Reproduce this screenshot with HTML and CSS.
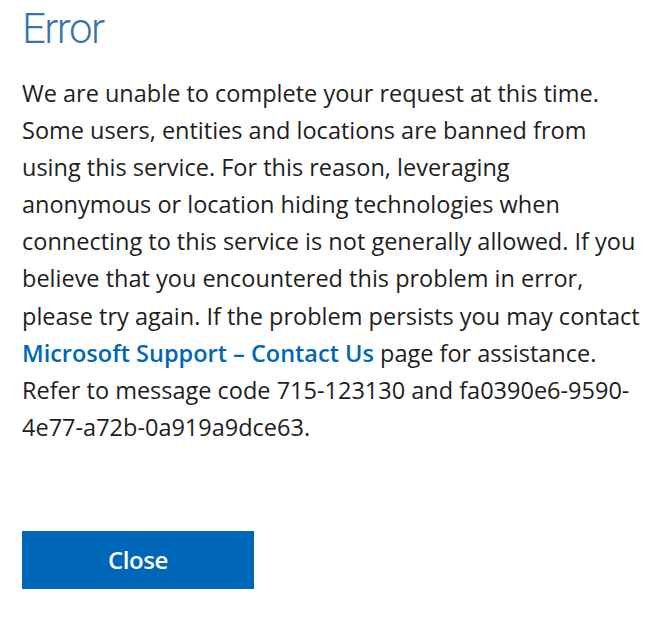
FILE: index.html
```html
<!DOCTYPE html>
<html>
<head>
<meta charset="utf-8">
<link rel="stylesheet" href="styles.css">
</head>
<body>
<div class="dialog">
  <h1 class="title">Error</h1>
  <p class="message">We are unable to complete your request at this time. Some users, entities and locations are banned from using this service. For this reason, leveraging anonymous or location hiding technologies when connecting to this service is not generally allowed. If you believe that you encountered this problem in error, please try again. If the problem persists you may contact <a class="link" href="#">Microsoft Support – Contact Us</a> page for assistance. Refer to message code 715-123130 and fa0390e6-9590-4e77-a72b-0a919a9dce63.</p>
  <div class="actions">
    <button class="btn">Close</button>
  </div>
</div>
</body>
</html>
```
FILE: styles.css
```css
html, body {
  margin: 0;
  padding: 0;
  background: #ffffff;
}
body {
  font-family: "Open Sans", "Noto Sans", sans-serif;
  color: #1e1e1e;
}
.dialog {
  padding: 3px 22px 0 22px;
  width: 620px;
}
.title {
  margin: 0;
  font-family: Roboto, "Open Sans", sans-serif;
  font-weight: 300;
  font-size: 42px;
  line-height: 52px;
  letter-spacing: -1.6px;
  color: #3a74a8;
}
.message {
  margin: 20px 0 0 0;
  font-size: 23.5px;
  line-height: 37.1px;
}
.link {
  color: #0067b8;
  font-weight: 600;
  text-decoration: none;
}
.actions {
  margin-top: 85px;
}
.btn {
  width: 232px;
  height: 58px;
  background: #0067b8;
  color: #ffffff;
  border: none;
  font-family: "Open Sans", "Noto Sans", sans-serif;
  font-size: 24px;
  font-weight: 600;
  letter-spacing: -0.4px;
  padding: 0;
}
```
